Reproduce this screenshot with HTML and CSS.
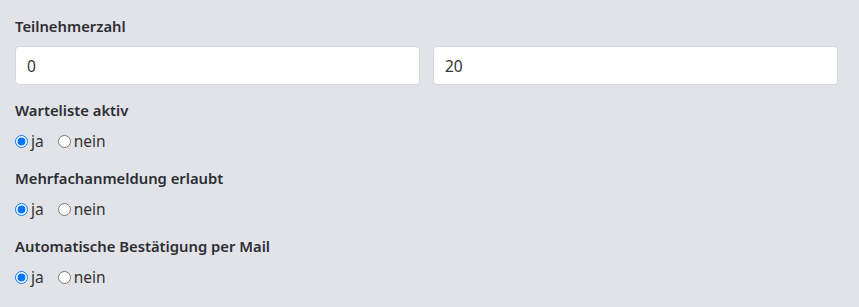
FILE: index.html
```html
<!DOCTYPE html>
<html lang="de">
<head>
<meta charset="utf-8">
<link rel="stylesheet" href="styles.css">
</head>
<body>
<div class="form">
  <div class="group">
    <div class="label">Teilnehmerzahl</div>
    <div class="inputs">
      <input class="control" type="text" value="0">
      <input class="control" type="text" value="20">
    </div>
  </div>
  <div class="group">
    <div class="label">Warteliste aktiv</div>
    <div class="radios">
      <label class="radio"><input type="radio" name="r1" checked><span>ja</span></label>
      <label class="radio"><input type="radio" name="r1"><span>nein</span></label>
    </div>
  </div>
  <div class="group">
    <div class="label">Mehrfachanmeldung erlaubt</div>
    <div class="radios">
      <label class="radio"><input type="radio" name="r2" checked><span>ja</span></label>
      <label class="radio"><input type="radio" name="r2"><span>nein</span></label>
    </div>
  </div>
  <div class="group">
    <div class="label">Automatische Bestätigung per Mail</div>
    <div class="radios">
      <label class="radio"><input type="radio" name="r3" checked><span>ja</span></label>
      <label class="radio"><input type="radio" name="r3"><span>nein</span></label>
    </div>
  </div>
</div>
</body>
</html>
```
FILE: styles.css
```css
html, body {
  margin: 0;
  padding: 0;
  background: #e2e3e8;
}
body {
  font-family: "Noto Sans", "DejaVu Sans", sans-serif;
  color: #2b2e33;
  font-size: 15px;
}
.form {
  padding: 15px 21px 0 15px;
}
.label {
  font-weight: 600;
  font-size: 14.8px;
  line-height: 22px;
  margin-bottom: 9px;
}
.inputs {
  display: grid;
  grid-template-columns: 1fr 1fr;
  gap: 13px;
  margin-bottom: 14px;
}
.control {
  box-sizing: border-box;
  height: 39px;
  width: 100%;
  margin: 0;
  border: 1px solid #d5d8de;
  border-radius: 4px;
  background: #fff;
  padding: 0 11px;
  font-family: "Noto Sans", sans-serif;
  font-size: 15.5px;
  color: #333;
  outline: none;
}
.radios {
  display: flex;
  gap: 14px;
  height: 22px;
  align-items: center;
  margin-bottom: 15px;
}
.radio {
  display: flex;
  align-items: center;
  font-size: 15.5px;
  color: #333;
}
.radio input {
  margin: 0 3px 0 0;
  width: 13px;
  height: 13px;
}
```
